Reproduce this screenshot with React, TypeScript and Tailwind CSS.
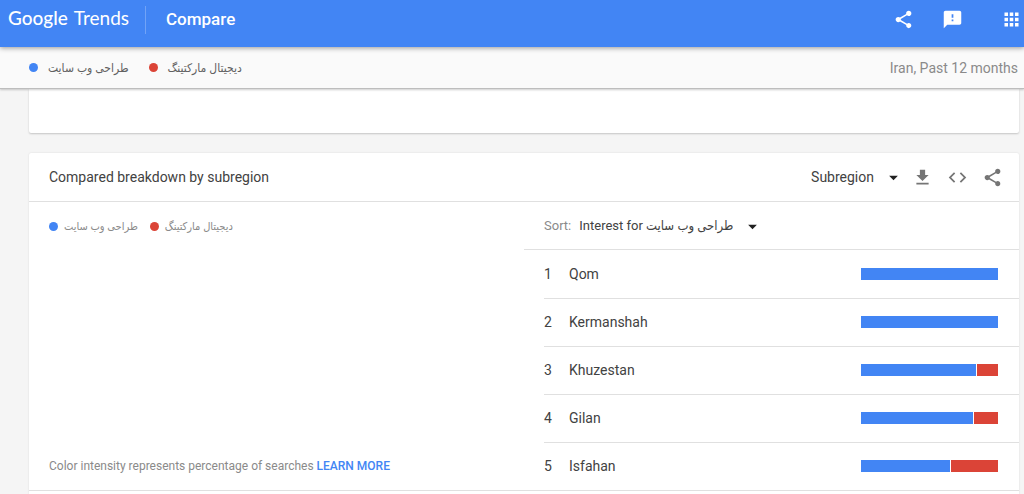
import type { ReactNode } from "react";
import {
  MdApps,
  MdArrowDropDown,
  MdCode,
  MdFeedback,
  MdFileDownload,
  MdShare,
} from "react-icons/md";
import clsx from "clsx";

const terms = [
  { label: "طراحی وب سایت", dot: "bg-[#4285f4]" },
  { label: "دیجیتال مارکتینگ", dot: "bg-[#db4437]" },
];

const regions = [
  { name: "Qom", share: 100 },
  { name: "Kermanshah", share: 100 },
  { name: "Khuzestan", share: 84 },
  { name: "Gilan", share: 82 },
  { name: "Isfahan", share: 65 },
];

function IconButton({ label, children }: { label: string; children: ReactNode }) {
  return (
    <button type="button" aria-label={label} className="block shrink-0 text-[21px]">
      {children}
    </button>
  );
}

function Select({ id, label, option }: { id: string; label: string; option: string }) {
  return (
    <span className="relative inline-flex items-center">
      <select
        id={id}
        aria-label={label}
        className="appearance-none bg-transparent pr-6 text-[#424242] outline-none [field-sizing:content]"
      >
        <option>{option}</option>
      </select>
      <MdArrowDropDown className="pointer-events-none absolute -right-1.5 size-[21px] text-[#212121]" />
    </span>
  );
}

function Legend({ compact = false }: { compact?: boolean }) {
  return (
    <ul className={clsx("flex items-center", compact ? "gap-3" : "gap-5")}>
      {terms.map((term) => (
        <li key={term.label} className={clsx("flex items-center", compact ? "gap-1.5" : "gap-2.5")}>
          <span className={clsx("size-[9px] rounded-full", term.dot)} />
          <span
            dir="rtl"
            className={compact ? "text-[11px] text-[#8a8a8a]" : "text-xs text-[#616161]"}
          >
            {term.label}
          </span>
        </li>
      ))}
    </ul>
  );
}

function Header() {
  return (
    <header className="relative z-20 flex h-[47px] items-center bg-[#4285f4] pr-0.5 pb-2 pl-2 text-white shadow-[0_1px_5px_rgba(0,0,0,0.4)]">
      <a href="#" className="flex items-baseline gap-1.5 pb-1 font-[Lato,sans-serif] text-[19px] leading-6">
        <span className="font-medium">Google</span>
        <span>Trends</span>
      </a>
      <span className="mr-5 ml-4 h-7 w-px bg-white/25" />
      <h1 className="text-[17px] font-medium">Compare</h1>
      <div className="ml-auto flex items-center gap-7">
        <IconButton label="Share">
          <MdShare />
        </IconButton>
        <IconButton label="Send feedback">
          <MdFeedback />
        </IconButton>
        <span className="pl-2.5">
          <IconButton label="Google apps">
            <MdApps />
          </IconButton>
        </span>
      </div>
    </header>
  );
}

function RegionList() {
  return (
    <ol className="pl-5">
      {regions.map((region, index) => (
        <li
          key={region.name}
          className="flex h-12 items-center border-t border-[#e0e0e0] pr-[21px] pb-0.5 text-[#424242] first:border-t-0 first:pb-0"
        >
          <span className="w-[25px]">{index + 1}</span>
          <span>{region.name}</span>
          <span className="ml-auto flex h-3 w-[137px] gap-px">
            <span className="bg-[#4285f4]" style={{ width: `${region.share}%` }} />
            {region.share < 100 && <span className="flex-1 bg-[#db4437]" />}
          </span>
        </li>
      ))}
    </ol>
  );
}

export default function App() {
  return (
    <div className="flex min-h-screen flex-col bg-[#f5f5f5] font-[Roboto,'DejaVu_Sans_Condensed','DejaVu_Sans',sans-serif] text-sm">
      <Header />
      <div className="relative z-10 flex h-[42px] items-center justify-between border-b border-[#bdbdbd] bg-[#fafafa] pr-1.5 pl-[29px] shadow-[0_1px_2px_rgba(0,0,0,0.2)]">
        <Legend />
        <span className="text-[#8a8a8a]">Iran, Past 12 months</span>
      </div>

      <main className="flex flex-1 flex-col gap-5 pr-[5px] pl-[29px]">
        <div className="h-11 rounded-b-xs bg-white shadow-[0_1px_2px_rgba(0,0,0,0.2)]" />

        <section className="flex flex-1 flex-col rounded-t-xs bg-white shadow-[0_0_2px_rgba(0,0,0,0.12)]">
          <div className="flex h-[49px] items-center border-b border-[#e0e0e0] pr-4 pl-5">
            <h2 className="text-[#424242]">Compared breakdown by subregion</h2>
            <div className="ml-auto flex items-center gap-[14px] text-[#757575]">
              <Select id="resolution" label="Resolution" option="Subregion" />
              <IconButton label="Download CSV">
                <MdFileDownload />
              </IconButton>
              <IconButton label="Embed">
                <MdCode />
              </IconButton>
              <IconButton label="Share chart">
                <MdShare />
              </IconButton>
            </div>
          </div>

          <div className="flex border-b border-[#e0e0e0]">
            <div className="flex w-1/2 flex-col justify-between pt-[17px] pb-4 pl-5">
              <Legend compact />
              <p className="text-xs text-[#8a8a8a]">
                Color intensity represents percentage of searches{" "}
                <a href="#" className="font-medium text-[#4285f4]">
                  LEARN MORE
                </a>
              </p>
            </div>
            <div className="w-1/2">
              <div className="flex h-12 items-center gap-2 border-b border-[#e0e0e0] pt-0.5 pl-5 text-[13px]">
                <label htmlFor="sort" className="text-[#8a8a8a]">
                  Sort:
                </label>
                <Select id="sort" label="Sort" option="Interest for طراحی وب سایت" />
              </div>
              <RegionList />
            </div>
          </div>
        </section>
      </main>
    </div>
  );
}
